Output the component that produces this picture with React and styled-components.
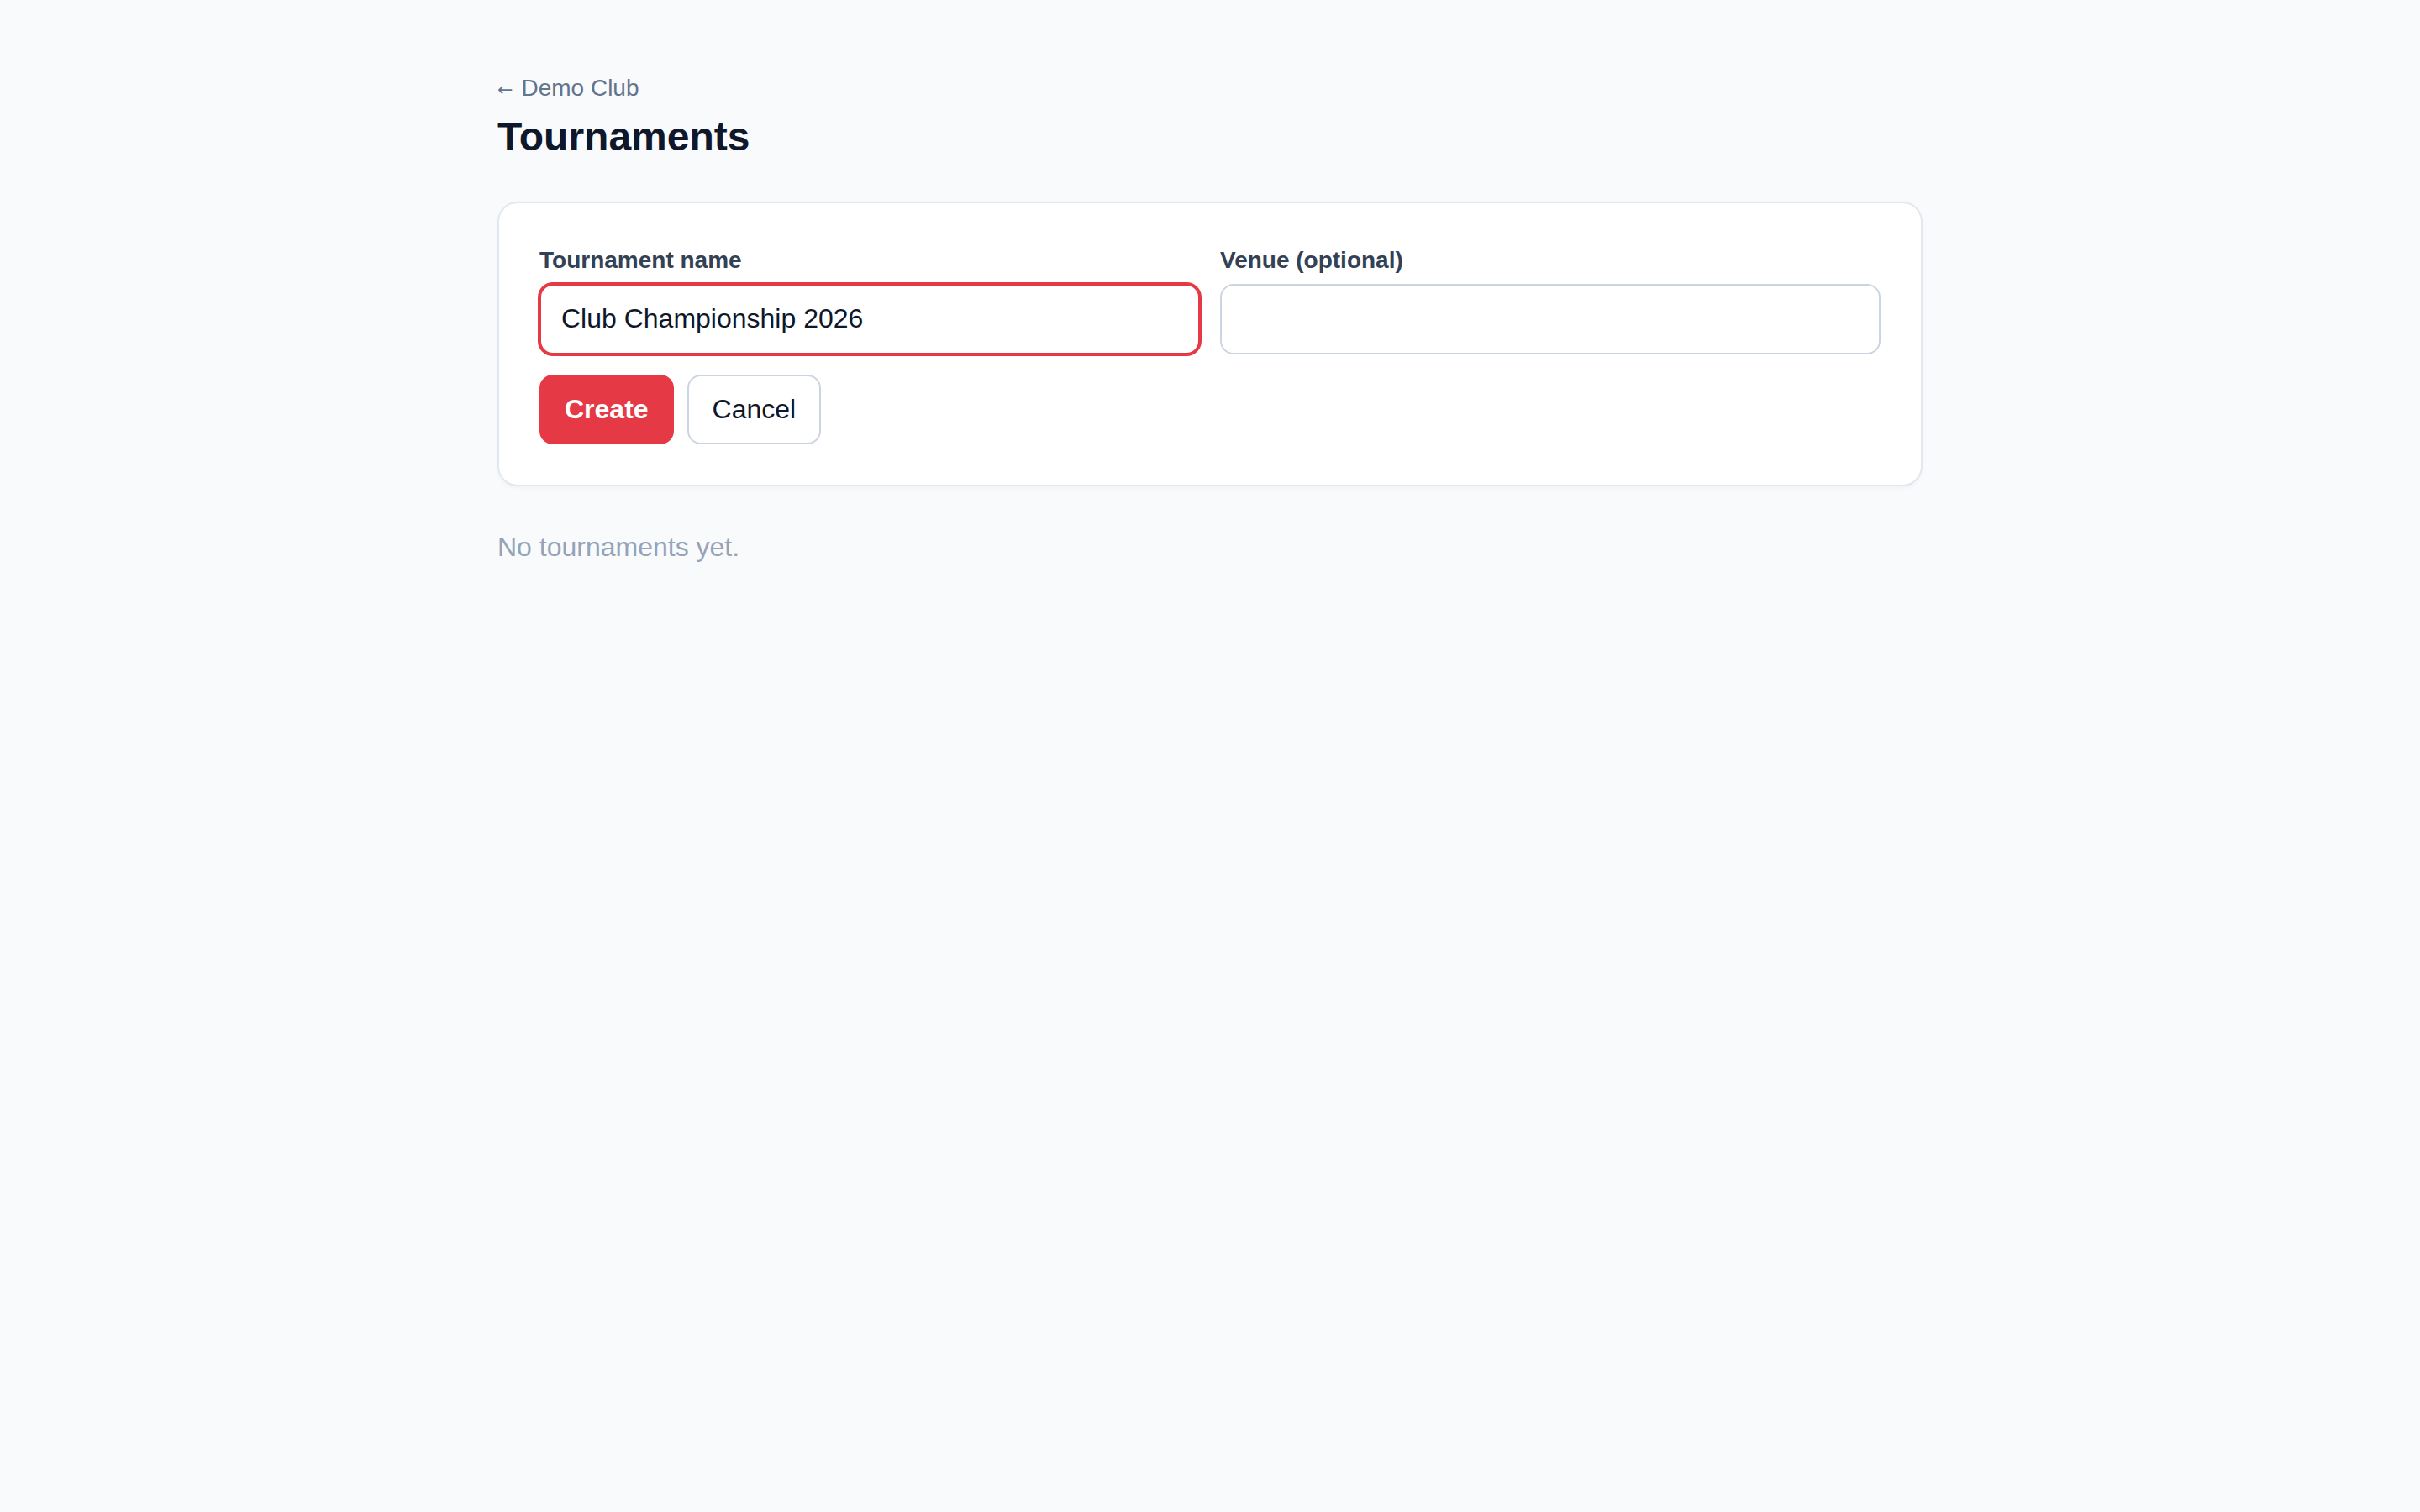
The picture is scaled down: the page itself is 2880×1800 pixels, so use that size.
import React, { useState } from "react";
import styled, { createGlobalStyle, css } from "styled-components";

const GlobalStyle = createGlobalStyle`
  *, *::before, *::after { box-sizing: border-box; }
  html, body {
    margin: 0;
    padding: 0;
    background: #f8fafc;
    min-height: 100%;
  }
  body {
    font-family: "Liberation Sans", Arial, sans-serif;
    color: #0f172a;
    -webkit-font-smoothing: antialiased;
  }
`;

const Page = styled.main`
  max-width: 1696px;
  margin: 0 auto;
  padding: 84px 0 80px;
`;

const BackLink = styled.a`
  display: flex;
  align-items: center;
  gap: 10px;
  width: fit-content;
  font-size: 28px;
  line-height: 42px;
  color: #64748b;
  text-decoration: none;
  cursor: pointer;
`;

const Arrow = styled.span`
  font-family: "DejaVu Sans", sans-serif;
  font-size: 22px;
  line-height: 1;
  position: relative;
  top: 2px;
`;

const Title = styled.h1`
  margin: 8px 0 0;
  font-size: 48px;
  line-height: 1.2;
  font-weight: 700;
  color: #0f172a;
`;

const Card = styled.form`
  margin-top: 48px;
  background: #ffffff;
  border: 2px solid #e2e8f0;
  border-radius: 24px;
  padding: 48px;
  box-shadow: 0 2px 4px rgba(15, 23, 42, 0.04);
  display: flex;
  flex-direction: column;
  gap: 24px;
`;

const FieldGrid = styled.div`
  display: grid;
  grid-template-columns: 1fr 1fr;
  gap: 24px;
`;

const Field = styled.label`
  display: flex;
  flex-direction: column;
  gap: 8px;
`;

const LabelText = styled.span`
  font-size: 28px;
  line-height: 40px;
  font-weight: 600;
  color: #334155;
`;

const Input = styled.input`
  height: 84px;
  width: 100%;
  padding: 0 24px;
  font-family: inherit;
  font-size: 32px;
  color: #0f172a;
  background: #ffffff;
  border: 2px solid #cbd5e1;
  border-radius: 16px;
  outline: none;
  ${(p) =>
    p.$active &&
    css`
      border-color: #e63946;
      box-shadow: 0 0 0 2px #e63946;
    `}
`;

const Actions = styled.div`
  display: flex;
  gap: 16px;
`;

const Button = styled.button`
  height: 83px;
  padding: 0 28px;
  font-family: inherit;
  font-size: 32px;
  border-radius: 16px;
  cursor: pointer;
  ${(p) =>
    p.$variant === "primary"
      ? css`
          background: #e63946;
          border: 2px solid #e63946;
          color: #ffffff;
          font-weight: 700;
        `
      : css`
          background: #ffffff;
          border: 2px solid #cbd5e1;
          color: #0f172a;
          font-weight: 400;
        `}
`;

const EmptyText = styled.p`
  margin: 48px 0 0;
  font-size: 32px;
  line-height: 48px;
  color: #94a3b8;
`;

export default function App() {
  const [name, setName] = useState("Club Championship 2026");
  const [venue, setVenue] = useState("");

  return (
    <>
      <GlobalStyle />
      <Page>
        <BackLink>
          <Arrow>←</Arrow>
          <span>Demo Club</span>
        </BackLink>
        <Title>Tournaments</Title>
        <Card onSubmit={(e) => e.preventDefault()}>
          <FieldGrid>
            <Field>
              <LabelText>Tournament name</LabelText>
              <Input
                $active
                value={name}
                onChange={(e) => setName(e.target.value)}
              />
            </Field>
            <Field>
              <LabelText>Venue (optional)</LabelText>
              <Input value={venue} onChange={(e) => setVenue(e.target.value)} />
            </Field>
          </FieldGrid>
          <Actions>
            <Button type="submit" $variant="primary">
              Create
            </Button>
            <Button type="button">Cancel</Button>
          </Actions>
        </Card>
        <EmptyText>No tournaments yet.</EmptyText>
      </Page>
    </>
  );
}
